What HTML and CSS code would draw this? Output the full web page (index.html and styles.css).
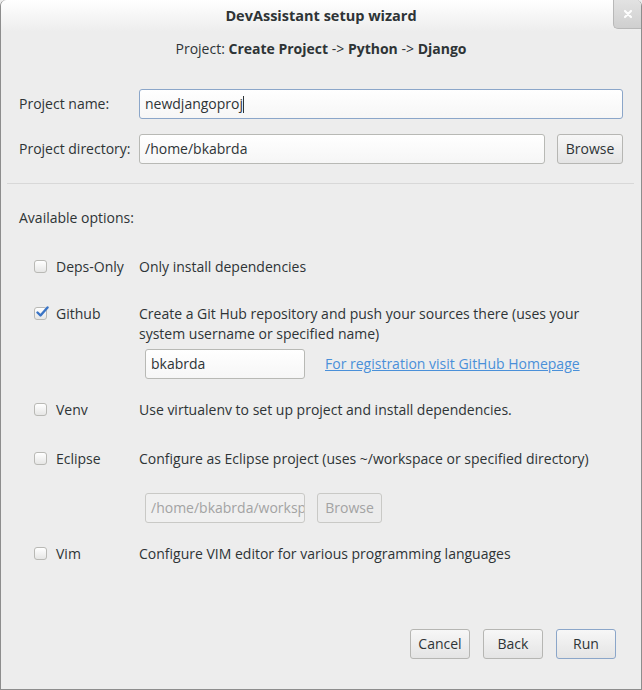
FILE: index.html
```html
<!DOCTYPE html>
<html>
<head>
<meta charset="utf-8">
<link rel="stylesheet" href="styles.css">
</head>
<body>
<div class="window">
  <div class="titlebar">
    <div></div>
    <div class="title">DevAssistant setup wizard</div>
    <div class="close-wrap"><div class="close">
      <svg width="10" height="10" viewBox="0 0 10 10"><path d="M2 2 L8 8 M8 2 L2 8" stroke="#fdfdfd" stroke-width="2.2" stroke-linecap="round"/></svg>
    </div></div>
  </div>
  <div class="subtitle">Project: <b>Create Project</b> -&gt; <b>Python</b> -&gt; <b>Django</b></div>

  <div class="form">
    <div class="label">Project name:</div>
    <div class="entry focused wide">newdjangoproj<span class="caret"></span></div>
    <div class="label">Project directory:</div>
    <div class="row-with-btn">
      <div class="entry grow">/home/bkabrda</div>
      <div class="button browse">Browse</div>
    </div>
  </div>

  <div class="separator"></div>

  <div class="section-label">Available options:</div>

  <div class="options">
    <div class="opt opt-deps">
      <div class="check"></div>
      <div class="opt-name">Deps-Only</div>
      <div class="opt-desc">Only install dependencies</div>
    </div>
    <div class="opt opt-github">
      <div class="check checked">
        <svg width="14" height="12" viewBox="0 0 14 12"><path d="M2.5 6.5 L5.5 9.5 L12.5 1.5" fill="none" stroke="#3a74c5" stroke-width="2.4" stroke-linecap="round" stroke-linejoin="round"/></svg>
      </div>
      <div class="opt-name">Github</div>
      <div class="opt-desc">Create a Git Hub repository and push your sources there (uses your<br>system username or specified name)</div>
      <div class="opt-extra">
        <div class="entry small">bkabrda</div>
        <a class="link">For registration visit GitHub Homepage</a>
      </div>
    </div>
    <div class="opt opt-venv">
      <div class="check"></div>
      <div class="opt-name">Venv</div>
      <div class="opt-desc">Use virtualenv to set up project and install dependencies.</div>
    </div>
    <div class="opt opt-eclipse">
      <div class="check"></div>
      <div class="opt-name">Eclipse</div>
      <div class="opt-desc">Configure as Eclipse project (uses ~/workspace or specified directory)</div>
      <div class="opt-extra">
        <div class="entry small disabled">/home/bkabrda/worksp</div>
        <div class="button disabled browse2">Browse</div>
      </div>
    </div>
    <div class="opt opt-vim">
      <div class="check"></div>
      <div class="opt-name">Vim</div>
      <div class="opt-desc">Configure VIM editor for various programming languages</div>
    </div>
  </div>

  <div class="spacer"></div>

  <div class="buttons">
    <div class="button action">Cancel</div>
    <div class="button action">Back</div>
    <div class="button action default">Run</div>
  </div>
</div>
</body>
</html>
```
FILE: styles.css
```css
* { box-sizing: border-box; }
html, body { margin: 0; padding: 0; }
body {
  font-family: "Open Sans", "DejaVu Sans", sans-serif;
  font-size: 14px;
  color: #2e3436;
  background: #ededed;
}
.window {
  width: 642px;
  height: 690px;
  display: flex;
  flex-direction: column;
  background: #ededed;
  border-left: 1px solid #8d8d8d;
  border-right: 1px solid #8d8d8d;
  border-bottom: 1px solid #8d8d8d;
  border-top-left-radius: 6px;
  border-top-right-radius: 6px;
}
.titlebar {
  height: 32px;
  display: grid;
  grid-template-columns: 1fr auto 1fr;
  background: linear-gradient(#ffffff, #ededed);
  border-top-left-radius: 6px;
  border-top-right-radius: 6px;
}
.title {
  font-weight: bold;
  font-size: 14.5px;
  line-height: 32px;
  color: #2e3436;
}
.close-wrap { display: flex; justify-content: flex-end; }
.close {
  width: 28px;
  height: 29px;
  display: flex;
  align-items: center;
  justify-content: center;
  background: linear-gradient(#e2e2e2, #cfcfcf);
  border-left: 1px solid #b8b8b8;
  border-bottom: 1px solid #b8b8b8;
  border-bottom-left-radius: 5px;
  border-top-right-radius: 5px;
}
.subtitle {
  margin-top: 7px;
  line-height: 20px;
  text-align: center;
}
.subtitle b { font-weight: bold; }
.form {
  margin-top: 30px;
  padding: 0 18px;
  display: grid;
  grid-template-columns: 120px 1fr;
  row-gap: 15px;
  align-items: center;
}
.label { line-height: 20px; }
.entry {
  height: 30px;
  line-height: 28px;
  padding: 0 5px;
  border: 1px solid #b8b9b5;
  border-radius: 3px;
  background: linear-gradient(#ffffff, #f6f6f6);
  white-space: nowrap;
  overflow: hidden;
}
.entry.focused { border-color: #8ba6c9; }
.caret {
  display: inline-block;
  width: 1px;
  height: 17px;
  background: #2e3436;
  vertical-align: -4px;
}
.row-with-btn { display: flex; gap: 12px; }
.grow { flex: 1; }
.button {
  height: 30px;
  line-height: 28px;
  padding: 0 4px;
  text-align: center;
  border: 1px solid #b6b6b3;
  border-radius: 3px;
  background: linear-gradient(#f7f7f7, #e4e4e4);
  color: #2e3436;
}
.browse { width: 66px; }
.separator {
  margin: 19px 7px 0 6px;
  height: 1px;
  background: #d8d8d8;
}
.section-label {
  margin-top: 24px;
  padding-left: 18px;
  line-height: 20px;
}
.options {
  margin-top: 29px;
  padding-left: 33px;
  padding-right: 12px;
  display: flex;
  flex-direction: column;
}
.opt {
  display: grid;
  grid-template-columns: 22px 83px 1fr;
  line-height: 20px;
}
.opt-github { margin-top: 27px; }
.opt-venv { margin-top: 21px; }
.opt-eclipse { margin-top: 29px; }
.opt-vim { margin-top: 21px; }
.check {
  width: 13px;
  height: 13px;
  margin-top: 3px;
  border: 1px solid #b9b9b5;
  border-radius: 3px;
  background: linear-gradient(#ffffff, #e6e6e5);
  position: relative;
}
.check svg { position: absolute; left: 0; top: -2px; }
.opt-desc { white-space: nowrap; }
.opt-extra {
  grid-column: 3;
  margin-left: 6px;
  display: flex;
  align-items: center;
  gap: 12px;
  margin-top: 5px;
}
.opt-github .opt-extra { gap: 20px; }
.entry.small { width: 160px; }
.link {
  color: #4a90d9;
  text-decoration: underline;
}
.entry.disabled {
  color: #a3a3a3;
  background: #f0f0f0;
  border-color: #c9c9c6;
  text-overflow: clip;
}
.button.disabled {
  color: #a3a3a3;
  background: #ececec;
  border-color: #c9c9c6;
}
.browse2 { width: 65px; }
.opt-eclipse .opt-extra { margin-top: 24px; }
.spacer { flex: 1; }
.buttons {
  display: flex;
  justify-content: flex-end;
  gap: 13px;
  padding-right: 25px;
  margin-bottom: 30px;
}
.button.action { width: 60px; }
.button.default { border-color: #8ba6c9; }
```
